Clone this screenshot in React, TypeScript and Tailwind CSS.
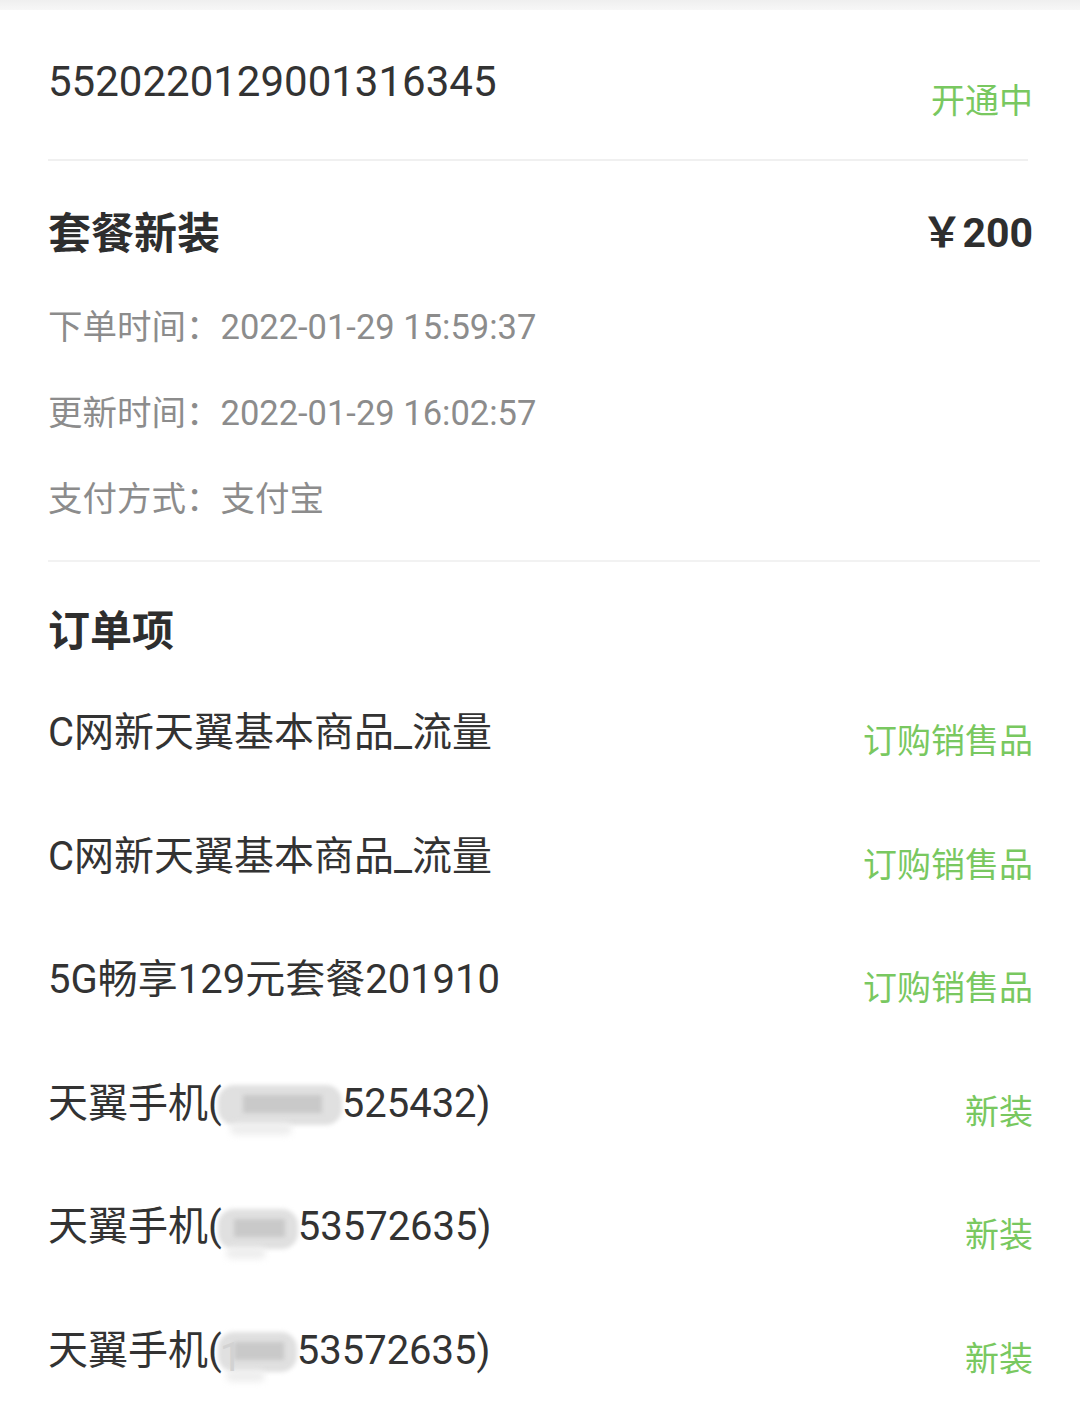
import React from 'react';

const font = { fontFamily: 'Roboto, "Noto Sans CJK SC", sans-serif' };

type Item = { name: React.ReactNode; tag: string };

function Mask({ width, lead }: { width: number; lead?: boolean }) {
  return (
    <span className="relative inline-block align-middle h-[44px] -mt-[6px] -ml-[4px]" style={{ width }}>
      <span className="absolute inset-x-0 top-[4px] bottom-0 rounded-[16px] bg-[#e0e0e0] blur-[2px]" />
      <span className="absolute left-[20%] right-[16%] top-[14px] h-[18px] bg-[#c9c9c9] blur-[2px]" />
      <span className="absolute left-[10%] right-[40%] bottom-[-10px] h-[12px] rounded-full bg-[#eeeeee] blur-[3px]" />
      {lead && <span className="absolute left-[2px] top-[6px] text-[#d2d2d2]">1</span>}
    </span>
  );
}

export default function App() {
  const details = [
    ['下单时间：', '2022-01-29 15:59:37'],
    ['更新时间：', '2022-01-29 16:02:57'],
    ['支付方式：', '支付宝'],
  ];

  const items: Item[] = [
    { name: 'C网新天翼基本商品_流量', tag: '订购销售品' },
    { name: 'C网新天翼基本商品_流量', tag: '订购销售品' },
    { name: '5G畅享129元套餐201910', tag: '订购销售品' },
    { name: <>天翼手机(<Mask width={124} />525432)</>, tag: '新装' },
    { name: <>天翼手机(<Mask width={80} />53572635)</>, tag: '新装' },
    { name: <>天翼手机(<Mask width={79} lead />53572635)</>, tag: '新装' },
  ];

  return (
    <div className="w-[1080px] min-h-[1424px] bg-white text-[#333333]" style={font}>
      <div className="h-[10px] bg-gradient-to-b from-[#efefef] to-[#f7f7f7]" />

      <div className="pl-[48px] pr-[47px]">
        {/* order number + status */}
        <div className="flex justify-between items-start h-[151px] border-b-2 border-[#f0f0f0] mr-[5px]">
          <div className="mt-[48px] text-[42px] leading-[48px] text-[#333333]">5520220129001316345</div>
          <div className="mt-[71px] -mr-[5px] text-[34px] leading-[40px] text-[#79c860]">开通中</div>
        </div>

        {/* package */}
        <div className="border-b-2 border-[#f2f2f2] pb-[41px] -mr-[7px] pr-[7px]">
          <div className="flex justify-between items-center mt-[49px] h-[48px]">
            <div className="text-[43px] font-bold text-[#2e2e2e]">套餐新装</div>
            <div className="text-[41px] font-bold text-[#2e2e2e]">￥200</div>
          </div>
          <div className="mt-[49px] flex flex-col gap-[46px]">
            {details.map(([k, v]) => (
              <div key={k} className="text-[34.5px] leading-[40px] text-[#8c8c8c]">
                {k}
                {v}
              </div>
            ))}
          </div>
        </div>

        {/* order items */}
        <div className="mt-[46px] text-[42px] leading-[48px] font-bold text-[#2e2e2e]">订单项</div>
        <div className="mt-[13px]">
          {items.map((it, i) => (
            <div key={i} className="flex justify-between items-start h-[123.6px]">
              <div className="mt-[40px] text-[40px] leading-[48px] text-[#333333] whitespace-nowrap">{it.name}</div>
              <div className="mt-[52px] text-[34px] leading-[40px] text-[#79c860]">{it.tag}</div>
            </div>
          ))}
        </div>
      </div>
    </div>
  );
}
